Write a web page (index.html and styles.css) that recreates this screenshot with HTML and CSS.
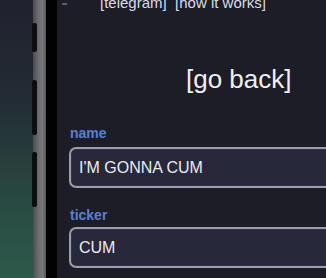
FILE: index.html
```html
<!DOCTYPE html>
<html>
<head>
<meta charset="utf-8">
<link rel="stylesheet" href="styles.css">
</head>
<body>
<div class="scene">
  <div class="backdrop"></div>
  <div class="frame">
    <span class="btn btn1"></span>
    <span class="btn btn2"></span>
    <span class="btn btn3"></span>
  </div>
  <div class="bezel"></div>
  <div class="screen">
    <span class="notch-mark"></span>
    <div class="links">[telegram]&nbsp;&nbsp;[how it works]</div>
    <div class="goback">[go back]</div>
    <div class="field">
      <div class="label">name</div>
      <div class="input">I'M GONNA CUM</div>
    </div>
    <div class="field">
      <div class="label">ticker</div>
      <div class="input">CUM</div>
    </div>
  </div>
</div>
</body>
</html>
```
FILE: styles.css
```css
html, body {
  margin: 0;
  padding: 0;
  width: 326px;
  height: 278px;
  overflow: hidden;
  background: #1c1d27;
}
.scene {
  display: flex;
  width: 326px;
  height: 278px;
  overflow: hidden;
}
.backdrop {
  width: 33px;
  flex: none;
  background: linear-gradient(to bottom, #20222e 0%, #232b33 35%, #28443f 65%, #2d5a4b 100%);
}
.frame {
  position: relative;
  width: 13px;
  flex: none;
  background: linear-gradient(to right, #4a4b4f 0%, #6c6c70 40%, #78787b 75%, #555558 100%);
}
.btn {
  position: absolute;
  left: -1px;
  width: 5px;
  background: #0d0d10;
  border-radius: 2px;
}
.btn1 { top: 23px; height: 29px; }
.btn2 { top: 80px; height: 55px; }
.btn3 { top: 152px; height: 55px; }
.bezel {
  width: 11px;
  flex: none;
  background: #020203;
}
.screen {
  position: relative;
  flex: none;
  width: 300px;
  padding-left: 12px;
  background: #1c1d27;
  font-family: "Liberation Sans", Arial, sans-serif;
  color: #ececf2;
}
.notch-mark {
  position: absolute;
  left: 5px;
  top: 3px;
  width: 5px;
  height: 2px;
  background: #5a5b66;
}
.links {
  margin-top: -5px;
  padding-left: 31px;
  font-size: 15px;
  line-height: 16px;
  white-space: nowrap;
  color: #dcdce4;
}
.goback {
  margin-top: 53px;
  padding-left: 117px;
  font-size: 26px;
  line-height: 30px;
  white-space: nowrap;
  color: #f0f0f4;
}
.field:first-of-type { margin-top: 31px; }
.field + .field { margin-top: 19px; }
.goback + .field { margin-top: 31px; }
.label {
  font-size: 14px;
  line-height: 16px;
  font-weight: bold;
  color: #5a7fd6;
  padding-left: 1px;
}
.input {
  margin-top: 6px;
  height: 37px;
  width: 300px;
  border: 2px solid #9c9cab;
  border-radius: 7px;
  background: #272839;
  padding-left: 8px;
  font-size: 16px;
  line-height: 37px;
  color: #ececf2;
  box-shadow: inset 0 0 0 1px #33344a;
}
.field + .field .input { margin-top: 4px; }
```
